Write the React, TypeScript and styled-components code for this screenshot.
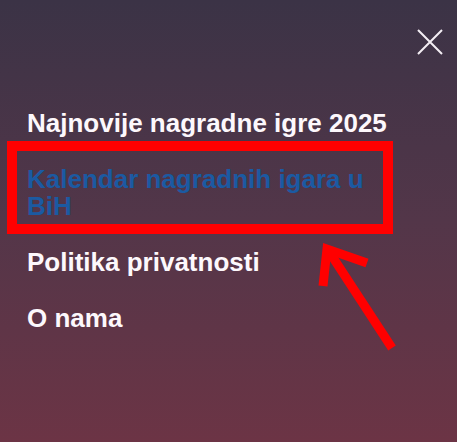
import React from 'react';
import styled, { createGlobalStyle } from 'styled-components';

const GlobalStyle = createGlobalStyle`
  html, body {
    margin: 0;
    padding: 0;
  }

  body {
    font-family: 'Liberation Sans', Arial, sans-serif;
  }
`;

const links = [
  { name: 'Najnovije nagradne igre 2025', active: false },
  { name: 'Kalendar nagradnih igara u BiH', active: true },
  { name: 'Politika privatnosti', active: false },
  { name: 'O nama', active: false },
];

export default function App() {
  const renderLinks = links.map((i, key) => (
    <Item key={key}>
      <MenuLink href='#' $active={i.active}>
        {i.name}
      </MenuLink>
      {i.active && <Highlight />}
    </Item>
  ));

  return (
    <>
      <GlobalStyle />
      <Panel>
        <Header>
          <CloseButton aria-label='Zatvori'>
            <svg width='26' height='26' viewBox='0 0 26 26'>
              <path d='M1 1L25 25M25 1L1 25' stroke='#f4eef4' strokeWidth='2' />
            </svg>
          </CloseButton>
        </Header>
        <Menu>{renderLinks}</Menu>
        <Arrow width='90' height='115' viewBox='0 0 90 115'>
          <path d='M82 108L20 13' stroke='#ff0000' strokeWidth='9' fill='none' />
          <path d='M13 46L17 9L57 23' stroke='#ff0000' strokeWidth='9' fill='none' strokeLinejoin='miter' />
        </Arrow>
      </Panel>
    </>
  );
}

const Panel = styled.div`
  position: relative;
  box-sizing: border-box;
  width: 457px;
  height: 442px;
  padding: 29px 14px 0 27px;
  background: linear-gradient(180deg, #3b3346 0%, #533649 50%, #6c3445 100%);
  overflow: hidden;
`;

const Header = styled.div`
  display: flex;
  justify-content: flex-end;
  height: 26px;
`;

const CloseButton = styled.button`
  display: flex;
  padding: 0;
  border: none;
  background: none;
  cursor: pointer;
`;

const Menu = styled.nav`
  display: flex;
  flex-direction: column;
  gap: 29px;
  max-width: 372px;
  margin-top: 55px;
`;

const Item = styled.div`
  position: relative;
`;

const MenuLink = styled.a<{ $active: boolean }>`
  display: block;
  font-size: 26px;
  line-height: 27px;
  font-weight: bold;
  text-decoration: none;
  color: ${(p) => (p.$active ? '#1b5aa2' : '#fdf8fc')};
`;

const Highlight = styled.div`
  position: absolute;
  top: -25px;
  left: -20px;
  width: 366px;
  height: 73px;
  border: 10px solid #ff0000;
  pointer-events: none;
`;

const Arrow = styled.svg`
  position: absolute;
  left: 310px;
  top: 240px;
`;
